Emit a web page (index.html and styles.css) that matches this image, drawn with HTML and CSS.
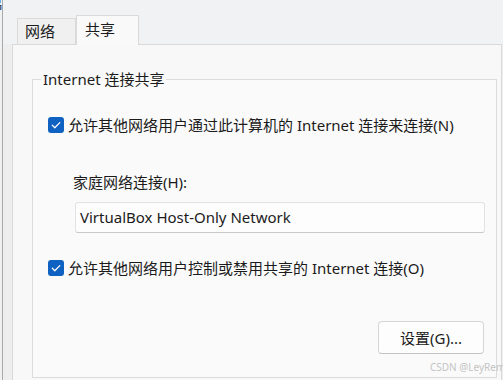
FILE: index.html
```html
<!DOCTYPE html>
<html>
<head>
<meta charset="utf-8">
<link rel="stylesheet" href="styles.css">
</head>
<body>
<div class="win">
  <div class="frame">
    <div class="tabstrip">
      <div class="tab">网络</div>
      <div class="tab active">共享</div>
    </div>
    <div class="panel">
      <fieldset class="group">
        <legend class="legend">Internet 连接共享</legend>
        <div class="check">
          <span class="box"><svg width="16" height="16" viewBox="0 0 16 16"><path d="M4.3 8.3 L6.8 10.7 L11.8 5.6" fill="none" stroke="#fff" stroke-width="1.3" stroke-linecap="round" stroke-linejoin="round"/></svg></span>
          <span class="check-text">允许其他网络用户通过此计算机的 Internet 连接来连接(N)</span>
        </div>
        <div class="home">
          <div class="home-label">家庭网络连接(H):</div>
          <div class="select">VirtualBox Host-Only Network</div>
        </div>
        <div class="check check2">
          <span class="box"><svg width="16" height="16" viewBox="0 0 16 16"><path d="M4.3 8.3 L6.8 10.7 L11.8 5.6" fill="none" stroke="#fff" stroke-width="1.3" stroke-linecap="round" stroke-linejoin="round"/></svg></span>
          <span class="check-text">允许其他网络用户控制或禁用共享的 Internet 连接(O)</span>
        </div>
        <div class="actions">
          <button class="btn">设置(G)...</button>
        </div>
      </fieldset>
    </div>
  </div>
  <div class="corner">吊</div>
  <div class="wm">CSDN @LeyRem</div>
</div>
</body>
</html>
```
FILE: styles.css
```css
html, body {
  margin: 0;
  padding: 0;
}
body {
  background: #f0f1f2;
  font-family: "Noto Sans", "Noto Sans CJK SC", sans-serif;
  color: #1b1b1b;
  font-size: 15px;
}
.win {
  position: relative;
  width: 503px;
  height: 380px;
  overflow: hidden;
  padding-left: 2px;
  box-sizing: border-box;
  background: #f0f1f2;
}
.frame {
  height: 100%;
  border-left: 1px solid #a9a9a9;
  padding-left: 9px;
  background: #eeeeee;
}
.tabstrip {
  height: 44px;
  display: flex;
  align-items: flex-end;
  background: #f1f2f4;
  margin-left: -9px;
  padding-left: 11px;
}
.tab {
  box-sizing: border-box;
  height: 26px;
  width: 59px;
  margin-left: 3px;
  padding-left: 7px;
  border: 1px solid #dadada;
  border-bottom: none;
  background: #f0f0f0;
  line-height: 24px;
  font-size: 15px;
}
.tab.active {
  position: relative;
  z-index: 1;
  margin-left: 0;
  width: 63px;
  height: 30px;
  margin-bottom: -1px;
  padding-left: 8px;
  background: #f9f9f9;
  line-height: 26px;
}
.panel {
  box-sizing: border-box;
  width: 490px;
  height: 340px;
  border: 1px solid #d9d9d9;
  background: #f8f8f8;
  padding-top: 25px;
}
.group {
  margin: 0 4px 0 19px;
  padding: 28px 0 23px 8px;
  border: 1px solid #dcdcdc;
  background: #fafafa;
  min-width: 0;
}
.legend {
  padding: 0 2px;
  line-height: 18px;
  font-size: 15px;
}
.check {
  display: flex;
  align-items: center;
  height: 18px;
  margin-left: 7px;
}
.box {
  width: 16px;
  height: 16px;
  border-radius: 3px;
  background: #0f62c1;
  display: flex;
  flex: none;
}
.check-text {
  margin-left: 4px;
  line-height: 18px;
  white-space: nowrap;
}
.home {
  margin-top: 39px;
  margin-left: 32px;
}
.home-label {
  line-height: 18px;
}
.select {
  box-sizing: border-box;
  margin-top: 11px;
  margin-left: 2px;
  width: 410px;
  height: 31px;
  border: 1px solid #e3e3e3;
  border-bottom-color: #c9c9c9;
  border-radius: 3px;
  background: #fdfdfd;
  padding-left: 4px;
  line-height: 29px;
  white-space: nowrap;
}
.check2 {
  margin-top: 26px;
}
.actions {
  display: flex;
  justify-content: flex-end;
  padding-right: 12px;
  margin-top: 44px;
}
.btn {
  box-sizing: border-box;
  width: 106px;
  height: 33px;
  border: 1px solid #d6d6d6;
  border-bottom-color: #c2c2c2;
  border-radius: 4px;
  background: #fdfdfd;
  font-family: "Noto Sans", "Noto Sans CJK SC", sans-serif;
  font-size: 15px;
  color: #1b1b1b;
  padding: 0;
}
.corner {
  position: absolute;
  left: -12px;
  top: -3px;
  font-size: 15px;
  line-height: 15px;
  color: #1a3a6a;
  width: 15px;
  clip-path: inset(0 0 0 12px);
}
.wm {
  position: absolute;
  left: 430px;
  top: 361px;
  font-size: 10px;
  line-height: 12px;
  color: #c4c4c4;
  white-space: nowrap;
}
```
